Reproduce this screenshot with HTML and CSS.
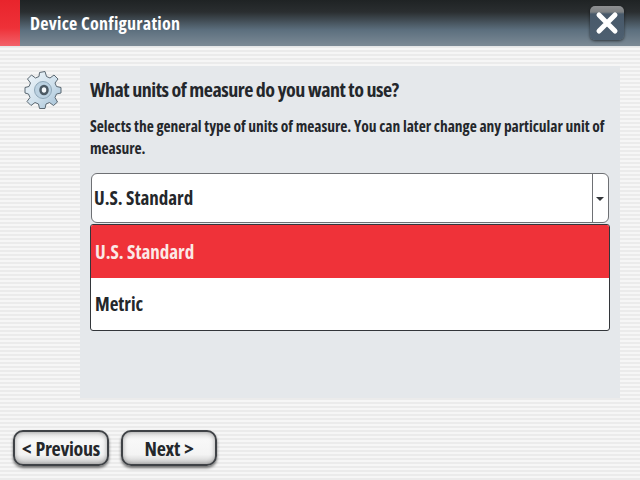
FILE: index.html
```html
<!DOCTYPE html>
<html lang="en">
<head>
    <meta charset="UTF-8">
    <title>Device Configuration</title>
    <link rel="stylesheet" href="styles.css">
</head>
<body>
    <div class="screen">
        <!-- title bar -->
        <div class="titlebar">
            <div class="titlebar-mark"></div>
            <div class="titlebar-title">Device Configuration</div>
            <button class="close-btn" type="button" aria-label="Close">
                <svg width="26" height="26" viewBox="0 0 26 26">
                    <path d="M5 5L21 21M21 5L5 21" stroke="#fff" stroke-width="5" stroke-linecap="round" fill="none"/>
                </svg>
            </button>
        </div>

        <div class="content">
            <div class="gear-col">
                <svg width="38" height="40" viewBox="0 0 38 40">
                    <defs>
                        <linearGradient id="gearFill" x1="0" y1="0" x2="1" y2="1">
                            <stop offset="0" stop-color="#f2f7fb"/>
                            <stop offset="0.55" stop-color="#cfe0ec"/>
                            <stop offset="1" stop-color="#9fbdd3"/>
                        </linearGradient>
                    </defs>
                    <path d="M15.5 2.5L21 1.5L22.5 6.5L26 8L30 5L34 9L31 13L32.5 16.5L37 17.5L37 23L32.5 24L31 27.5L33.5 32L29.5 35.5L25.5 32.5L22 34L21 38.5L15.5 38.5L14.5 34L11 32.5L7 35.5L3 31.5L6 27.5L4.5 24L1 23L1 17.5L5 16.5L6.5 13L3.5 9L7.5 5L11.5 8L15 6.5Z" fill="url(#gearFill)" stroke="#5b6872" stroke-width="1" stroke-linejoin="round"/>
                    <circle cx="19" cy="20" r="8.5" fill="#bcd2e2" stroke="#8fa7b8" stroke-width="1"/>
                    <ellipse cx="20" cy="20" rx="3.5" ry="4" fill="#f4f8fb" stroke="#4b5964" stroke-width="2.5"/>
                </svg>
            </div>
            <div class="panel">
                <h1 class="question">What units of measure do you want to use?</h1>
                <p class="help">Selects the general type of units of measure. You can later change any particular unit of measure.</p>

                <div class="select">
                    <span class="select-value">U.S. Standard</span>
                    <span class="select-arrow"></span>
                </div>
                <ul class="options">
                    <li class="option option-active">U.S. Standard</li>
                    <li class="option">Metric</li>
                </ul>
            </div>
        </div>

        <div class="footer">
            <button class="nav-btn" type="button">&lt; Previous</button>
            <button class="nav-btn" type="button">Next &gt;</button>
        </div>
    </div>
</body>
</html>
```

FILE: styles.css
```css
/* base */
body {
    margin: 0;
    font-family: "Open Sans", "Liberation Sans", sans-serif;
    font-stretch: condensed;
    font-weight: 700;
    color: #24272b;
}

.screen {
    width: 640px;
    height: 480px;
    overflow: hidden;
    display: flex;
    flex-direction: column;
    background: repeating-linear-gradient(to bottom, #f6f6f6 0, #f6f6f6 2px, #ebebeb 2px, #ebebeb 4px);
}

/* title bar */
.titlebar {
    display: flex;
    align-items: center;
    height: 46px;
    flex: none;
    background: linear-gradient(to bottom, #1f2324 0, #2a2e30 12px, #5c6f7e 30px, #7c8a95 46px);
    box-shadow: 0 1px 0 #e4e6e7;
}

.titlebar-mark {
    width: 20px;
    height: 100%;
    background: linear-gradient(to bottom, #e8242c 0, #ee3138 28px, #f2626a 46px);
}

.titlebar-title {
    flex: 1;
    margin-left: 10px;
    font-size: 18px;
    letter-spacing: 0.25px;
    color: #fff;
}

.close-btn {
    width: 34px;
    height: 34px;
    margin-right: 16px;
    padding: 0;
    display: flex;
    align-items: center;
    justify-content: center;
    border: none;
    border-radius: 5px;
    background: linear-gradient(to bottom, #8e9092 0, #7d8082 6px, #48596a 8px, #4d5f70 100%);
    box-shadow: 0 1px 3px rgba(0,0,0,0.6);
}

/* main area */
.content {
    display: flex;
    height: 332px;
    margin-top: 20px;
    flex: none;
}

.gear-col {
    width: 80px;
    padding: 4px 0 0 24px;
    box-sizing: border-box;
}

.panel {
    width: 540px;
    padding: 12px 10px 0;
    box-sizing: border-box;
    background: #e5e8eb;
}

.question {
    margin: 0 0 13px;
    font-size: 20px;
    line-height: 24px;
    letter-spacing: -0.5px;
    font-weight: 700;
}

.help {
    margin: 0 0 14px;
    font-size: 15.5px;
    line-height: 22px;
    letter-spacing: -0.04px;
}

.select {
    display: flex;
    align-items: stretch;
    height: 50px;
    margin: 0 1px 1px;
    box-sizing: border-box;
    background: #fff;
    border: 1px solid #6e7074;
    border-radius: 6px;
}

.select-value {
    flex: 1;
    padding-left: 2px;
    font-size: 19px;
    line-height: 49px;
}

.select-arrow {
    width: 15px;
    border-left: 1px solid #6e7074;
    position: relative;
}

.select-arrow::after {
    content: "";
    position: absolute;
    left: 3px;
    top: 23px;
    border-left: 4px solid transparent;
    border-right: 4px solid transparent;
    border-top: 4px solid #33363a;
}

.options {
    margin: 0;
    padding: 0;
    list-style: none;
    background: #fff;
    border: 1px solid #33363a;
    border-radius: 3px;
    overflow: hidden;
}

.option {
    height: 52px;
    padding-left: 4px;
    font-size: 19px;
    line-height: 52px;
}

.option-active {
    height: 53px;
    line-height: 54px;
    background: #ef3239;
    color: #fbe9e6;
}

/* footer */
.footer {
    display: flex;
    gap: 12px;
    padding: 32px 0 0 13px;
}

.nav-btn {
    width: 96px;
    height: 36px;
    padding: 0;
    font-family: inherit;
    font-stretch: inherit;
    font-weight: 700;
    font-size: 20px;
    letter-spacing: -0.3px;
    word-spacing: 1px;
    white-space: nowrap;
    color: #24272b;
    border: 2px solid #3f4246;
    border-radius: 10px;
    background: linear-gradient(to bottom, #e4e4e4 0, #f8f8f8 25%, #f4f4f4 70%, #cfcfcf 100%);
    box-shadow: 0 2px 3px rgba(0,0,0,0.55), inset 0 0 5px rgba(0,0,0,0.35);
}
```
